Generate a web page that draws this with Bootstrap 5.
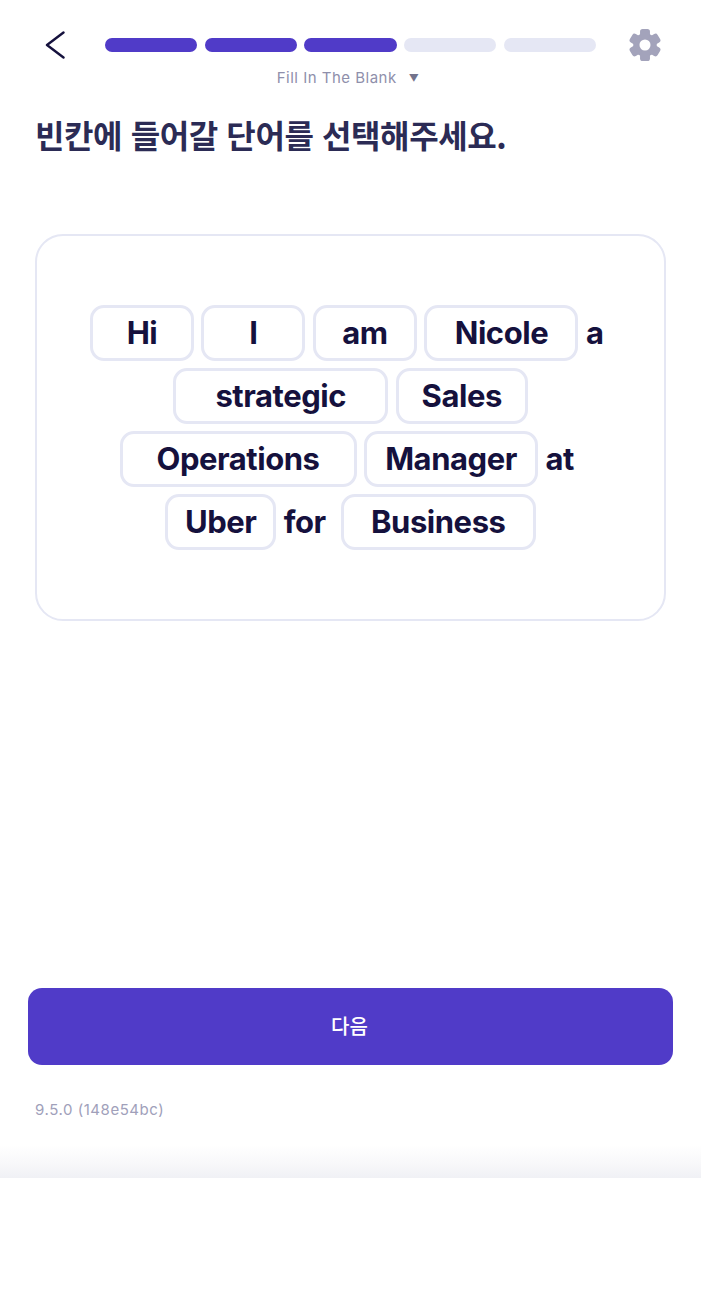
<!DOCTYPE html>
<html lang="ko">
<head>
  <meta charset="UTF-8" />
  <meta name="viewport" content="width=device-width, initial-scale=1.0"/>
  <link href="https://cdn.jsdelivr.net/npm/bootstrap@5.3.3/dist/css/bootstrap.min.css" rel="stylesheet"/>
  <script src="https://cdn.jsdelivr.net/npm/bootstrap@5.3.3/dist/js/bootstrap.bundle.min.js"></script>
  <title>Fill In The Blank</title>
  <style>
    body {
      font-family: Inter, "Noto Sans CJK KR", sans-serif;
      background: #fff;
    }

    .screen {
      width: 701px;
      height: 1292px;
    }

    .top-bar {
      height: 62px;
      padding: 14px 35px 0 45px;
    }

    .back-icon {
      width: 20px;
      height: 28px;
      margin-top: 17px;
    }

    .steps {
      margin-left: 40px;
      margin-top: 24px;
      width: 491px;
      gap: 7.5px;
    }

    .step {
      flex: 1;
      height: 14px;
      border-radius: 7px;
      background: #e5e7f4;
    }

    .step-on {
      background: #503bc8;
    }

    .gear-icon {
      width: 34px;
      height: 34px;
      margin-left: 32px;
      margin-top: 14px;
    }

    .mode-label {
      height: 33px;
      font-size: 15px;
      letter-spacing: .5px;
      color: #8f8fab;
      padding-top: 5px;
      padding-right: 5px;
    }

    .mode-arrow {
      font-size: 10px;
      margin-left: 12px;
      color: #73738c;
      vertical-align: 1px;
    }

    .page-title {
      font-family: "Noto Sans CJK KR", sans-serif;
      font-size: 32px;
      font-weight: 700;
      letter-spacing: -.4px;
      line-height: 44px;
      color: #2b2b55;
      margin: 0 0 0 35px;
      height: 139px;
      padding-top: 17px;
    }

    .blank-box {
      width: 631px;
      height: 387px;
      margin-left: 35px;
      border: 2px solid #e5e7f4;
      border-radius: 28px;
      padding-top: 69px;
    }

    .line {
      height: 63px;
      gap: 7.5px;
      font-size: 31px;
      font-weight: 650;
      letter-spacing: -.45px;
      color: #15113d;
    }

    .slot {
      height: 56px;
      border: 3px solid #e5e7f4;
      border-radius: 14px;
      background: #fff;
    }

    .word {
      line-height: 56px;
      margin-right: 7.5px;
    }

    .w-104 { width: 104px; }
    .w-154 { width: 154px; }
    .w-215 { width: 215px; }
    .w-132 { width: 132px; }
    .w-237 { width: 237px; }
    .w-174 { width: 174px; }
    .w-111 { width: 111px; }
    .w-195 { width: 195px; }

    .next-btn {
      display: block;
      width: 645px;
      height: 77px;
      margin: 367px 0 0 28px;
      padding: 0 2px 1px 0;
      border: 0;
      border-radius: 14px;
      background: #503bc8;
      color: #fff;
      font-family: "Noto Sans CJK KR", sans-serif;
      font-size: 20px;
      font-weight: 500;
    }

    .version {
      margin: 35px 0 0 35px;
      font-size: 15px;
      line-height: 20px;
      letter-spacing: .55px;
      color: #a0a0ba;
    }

    .bottom-fade {
      height: 33px;
      margin-top: 25px;
      background: linear-gradient(to bottom, #ffffff, #f8f8fa 55%, #f0f1f5);
    }
  </style>
</head>
<body>
  <div class="screen">
    <div class="top-bar d-flex align-items-start">
      <svg class="back-icon flex-shrink-0" viewBox="0 0 20 28" fill="none">
        <path d="M18.5 1.5 L2 14 L18.5 26.5" stroke="#15113d" stroke-width="2.4" stroke-linecap="round" stroke-linejoin="round"/>
      </svg>
      <div class="steps d-flex flex-shrink-0">
        <div class="step step-on"></div>
        <div class="step step-on"></div>
        <div class="step step-on"></div>
        <div class="step"></div>
        <div class="step"></div>
      </div>
      <svg class="gear-icon flex-shrink-0" viewBox="0 0 24 24">
        <g fill="#a3a3bb">
          <circle cx="12" cy="12" r="8.3"/>
          <rect x="8.5" y="0.7" width="7" height="7" rx="1.8"/>
          <rect x="8.5" y="0.7" width="7" height="7" rx="1.8" transform="rotate(60 12 12)"/>
          <rect x="8.5" y="0.7" width="7" height="7" rx="1.8" transform="rotate(120 12 12)"/>
          <rect x="8.5" y="0.7" width="7" height="7" rx="1.8" transform="rotate(180 12 12)"/>
          <rect x="8.5" y="0.7" width="7" height="7" rx="1.8" transform="rotate(240 12 12)"/>
          <rect x="8.5" y="0.7" width="7" height="7" rx="1.8" transform="rotate(300 12 12)"/>
        </g>
        <circle cx="12" cy="12" r="3.9" fill="#fff"/>
      </svg>
    </div>

    <div class="mode-label text-center">Fill In The Blank<span class="mode-arrow">▼</span></div>

    <h1 class="page-title">빈칸에 들어갈 단어를 선택해주세요.</h1>

    <div class="blank-box">
      <div class="line d-flex justify-content-center align-items-start">
        <div class="slot w-104 d-flex align-items-center justify-content-center">Hi</div>
        <div class="slot w-104 d-flex align-items-center justify-content-center">I</div>
        <div class="slot w-104 d-flex align-items-center justify-content-center">am</div>
        <div class="slot w-154 d-flex align-items-center justify-content-center">Nicole</div>
        <div class="word">a</div>
      </div>
      <div class="line d-flex justify-content-center align-items-start">
        <div class="slot w-215 d-flex align-items-center justify-content-center">strategic</div>
        <div class="slot w-132 d-flex align-items-center justify-content-center">Sales</div>
      </div>
      <div class="line d-flex justify-content-center align-items-start">
        <div class="slot w-237 d-flex align-items-center justify-content-center">Operations</div>
        <div class="slot w-174 d-flex align-items-center justify-content-center">Manager</div>
        <div class="word">at</div>
      </div>
      <div class="line d-flex justify-content-center align-items-start">
        <div class="slot w-111 d-flex align-items-center justify-content-center">Uber</div>
        <div class="word">for</div>
        <div class="slot w-195 d-flex align-items-center justify-content-center">Business</div>
      </div>
    </div>

    <button type="button" class="next-btn">다음</button>

    <div class="version">9.5.0 (148e54bc)</div>

    <div class="bottom-fade"></div>
  </div>
</body>
</html>
